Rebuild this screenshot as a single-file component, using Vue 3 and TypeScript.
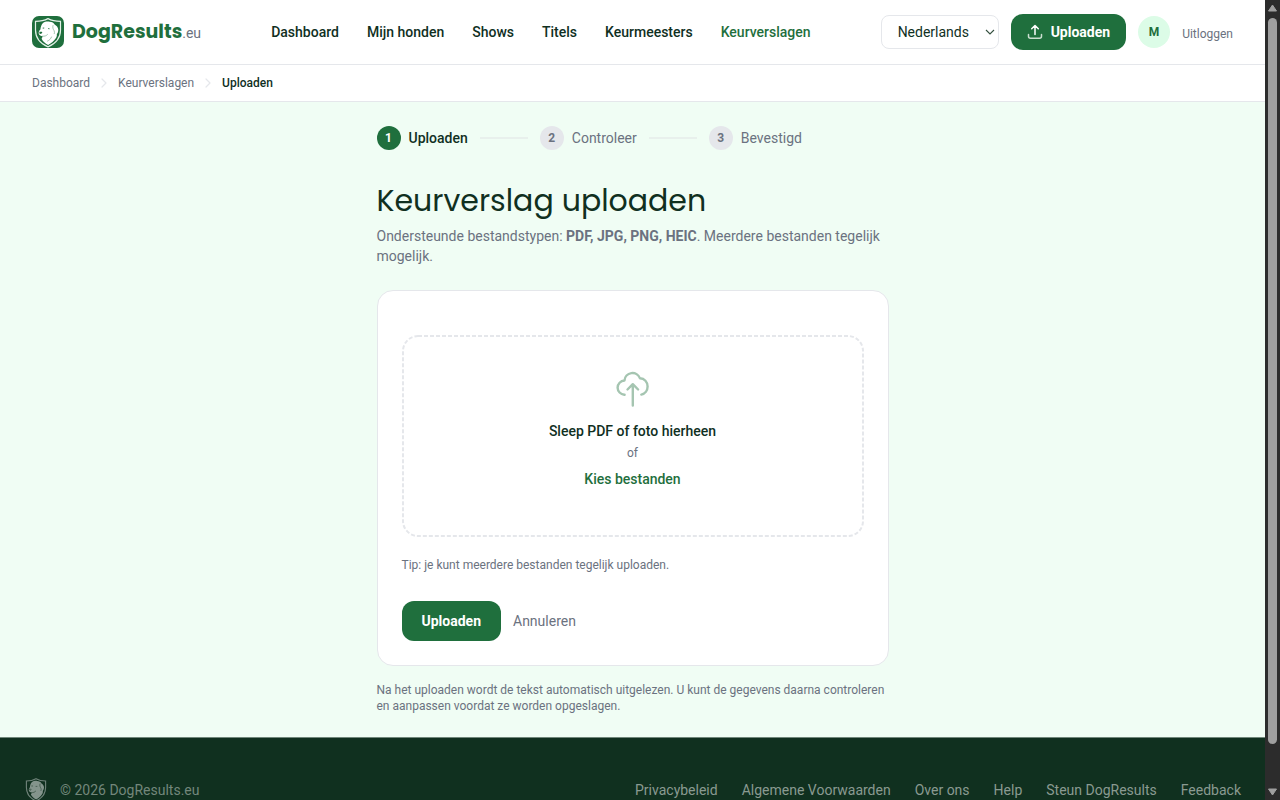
<script setup lang="ts">
import { ref } from 'vue'

interface Step {
  nr: number
  label: string
}

const navItems: string[] = ['Dashboard', 'Mijn honden', 'Shows', 'Titels', 'Keurmeesters', 'Keurverslagen']
const activeNav = 'Keurverslagen'
const crumbs: string[] = ['Dashboard', 'Keurverslagen']
const steps: Step[] = [
  { nr: 1, label: 'Uploaden' },
  { nr: 2, label: 'Controleer' },
  { nr: 3, label: 'Bevestigd' },
]
const currentStep = 1
const footerLinks: string[] = [
  'Privacybeleid',
  'Algemene Voorwaarden',
  'Over ons',
  'Help',
  'Steun DogResults',
  'Feedback',
]
const language = ref('nl')
</script>

<template>
  <div class="screen">
    <div class="page">
      <header class="topbar">
        <a class="brand" href="#">
          <svg class="brand-mark" viewBox="0 0 32 32" aria-hidden="true">
            <rect width="32" height="32" rx="7" fill="#1f6f3d" />
            <path d="M16 2.600C12.500 4.500 8.300 5.300 3.500 5.300V14c0 8 4.800 13.600 12.500 16.900 7.700-3.300 12.500-8.900 12.500-16.900V5.300C23.700 5.300 19.500 4.500 16 2.600z" fill="none" stroke="#e4f2e8" stroke-width="1.200" />
            <path d="M11 7c1.700-1.300 4.200-1.700 6.600-1.300 2.500.2 4.300 1.200 5 2.800 1.900 1 3.500 2.800 3.700 5.200 0 1.800-.5 3.300-1.500 4.400.3 1.500-.1 3-1.200 4.500-1.600 2.500-4.200 4.800-7.500 6.500-3-1.600-5.200-3.700-6.500-6.400l1.200-2.400c-1.800-.2-3.700-1.100-4.100-2.900-.2-1.600.6-2.900 1.700-3.900.2-2.500 1-5 2.600-6.500z" fill="#fff" />
            <path d="M21 9.500c-.7 2 .2 3.700 1.100 5.200.5 1.100.5 2.100.2 3M10.600 20.200c2.200.3 3.800-.5 4.900-1.700M19.500 21c-.8 1.900-2.100 3.300-4 4.100" fill="none" stroke="#8db79c" stroke-width=".8" stroke-linecap="round" />
            <path d="M7.400 15.700h2.400l.6.900-1.400 1.400-1.600-.6zM10.600 11.800l1.600-.2v1h-1.500zM16 12.200l1.700.2-.2.900-1.500-.2z" fill="#1f6f3d" />
          </svg>
          <span class="brand-text"><span class="brand-name">DogResults</span><span class="brand-tld">.eu</span></span>
        </a>
        <nav class="nav" aria-label="Hoofdmenu">
          <a v-for="item in navItems" :key="item" href="#" :class="{ active: item === activeNav }">{{ item }}</a>
        </nav>
        <div class="actions">
          <div class="lang">
            <select v-model="language" aria-label="Taal">
              <option value="nl">Nederlands</option>
              <option value="en">English</option>
              <option value="de">Deutsch</option>
            </select>
            <svg viewBox="0 0 10 6" aria-hidden="true"><path d="M1 1l4 4 4-4" fill="none" stroke="#34503f" stroke-width="1.100" /></svg>
          </div>
          <a class="btn btn-top" href="#">
            <svg viewBox="0 0 16 16" aria-hidden="true">
              <path d="M1.500 10.500v1.700a2 2 0 0 0 2 2h9a2 2 0 0 0 2-2v-1.700" fill="none" stroke="#c9decf" stroke-width="1.500" stroke-linecap="round" />
              <path d="M8 10.500V1.500M4.700 4.800L8 1.500l3.300 3.300" fill="none" stroke="#fff" stroke-width="1.500" stroke-linecap="round" stroke-linejoin="round" />
            </svg>
            Uploaden
          </a>
          <a class="avatar" href="#">M</a>
          <button class="logout" type="button">Uitloggen</button>
        </div>
      </header>

      <nav class="crumbs" aria-label="Kruimelpad">
        <template v-for="crumb in crumbs" :key="crumb">
          <a href="#">{{ crumb }}</a>
          <svg viewBox="0 0 12 12" aria-hidden="true"><path d="M4 2l4 4-4 4" fill="none" stroke="#e5e7eb" stroke-width="1.200" stroke-linecap="round" stroke-linejoin="round" /></svg>
        </template>
        <span class="current">Uploaden</span>
      </nav>

      <main class="main">
        <div class="column">
          <ol class="steps">
            <li v-for="step in steps" :key="step.nr" :class="{ current: step.nr === currentStep }">
              <span class="dot">{{ step.nr }}</span>
              <span class="step-label">{{ step.label }}</span>
            </li>
          </ol>

          <h1>Keurverslag uploaden</h1>
          <p class="intro">
            Ondersteunde bestandstypen: <strong>PDF, JPG, PNG, HEIC</strong>. Meerdere bestanden tegelijk mogelijk.
          </p>

          <form class="card" @submit.prevent>
            <div class="dropzone">
              <svg class="outline" aria-hidden="true"><rect width="100%" height="100%" rx="15" /></svg>
              <svg class="cloud" viewBox="0.700 1 40 40" aria-hidden="true">
                <path d="M12.300 26.700h-.3a7.200 7.200 0 0 1-6.700-7c0-3.900 3-7 6.900-7.200a8 8 0 0 1 15.500-2.200c4.400.2 7.600 3.700 7.600 8.200 0 4-2.600 7.300-6.300 8.100" fill="none" stroke="#a5c5b1" stroke-width="2.400" stroke-linecap="round" stroke-linejoin="round" />
                <path d="M20.500 37.500V16.500M15.200 21.500l5.300-5.300 5.300 5.300" fill="none" stroke="#a5c5b1" stroke-width="2.400" stroke-linecap="round" stroke-linejoin="round" />
              </svg>
              <p class="drop-title">Sleep PDF of foto hierheen</p>
              <p class="drop-or">of</p>
              <label class="pick">Kies bestanden<input type="file" multiple accept=".pdf,.jpg,.png,.heic" /></label>
            </div>
            <p class="tip">Tip: je kunt meerdere bestanden tegelijk uploaden.</p>
            <div class="form-actions">
              <button class="btn btn-submit" type="submit">Uploaden</button>
              <a class="cancel" href="#">Annuleren</a>
            </div>
          </form>

          <p class="note">
            Na het uploaden wordt de tekst automatisch uitgelezen. U kunt de gegevens daarna controleren en aanpassen
            voordat ze worden opgeslagen.
          </p>
        </div>
      </main>

      <footer class="footer">
        <div class="copyright">
          <svg viewBox="3 2 26 30" aria-hidden="true">
            <path d="M16 2.800C12.500 4.800 8.300 5.700 4 5.700V14c0 7.800 4.500 13.400 12 16.700 7.500-3.300 12-8.900 12-16.700V5.700C23.700 5.700 19.500 4.800 16 2.800z" fill="none" stroke="#70837a" stroke-width="1.400" />
            <path d="M11 7c1.700-1.300 4.200-1.700 6.600-1.300 2.500.2 4.300 1.200 5 2.800 1.900 1 3.200 2.800 3.400 5.200 0 1.800-.5 3.300-1.500 4.400.3 1.500-.1 3-1.200 4.500-1.600 2.500-4 4.500-7.200 6.200-3-1.600-5.200-3.400-6.500-6.100l1.200-2.400c-1.800-.2-3.400-1.100-3.800-2.900-.2-1.600.6-2.900 1.400-3.900.2-2.500 1-5 2.600-6.500z" fill="#84948c" />
            <path d="M21 9.500c-.7 2 .2 3.700 1.100 5.200.5 1.100.5 2.100.2 3M10.600 20.200c2.200.3 3.800-.5 4.900-1.700M8 16h2l-.8 1.200zM10.600 12h1.200M16 12.500h1.200" fill="none" stroke="#3c5648" stroke-width="1" stroke-linecap="round" />
          </svg>
          <span>© 2026 DogResults.eu</span>
        </div>
        <nav class="footer-links" aria-label="Voettekst">
          <a v-for="link in footerLinks" :key="link" href="#">{{ link }}</a>
        </nav>
      </footer>
    </div>

    <div class="scrollbar" aria-hidden="true">
      <svg viewBox="0 0 15 18"><path d="M7.500 5L11.500 11H3.500z" fill="#9f9f9f" stroke="#9f9f9f" stroke-linejoin="round" /></svg>
      <div class="track"><div class="thumb"></div></div>
      <svg viewBox="0 0 15 18"><path d="M7.500 13L11.500 7H3.500z" fill="#9f9f9f" stroke="#9f9f9f" stroke-linejoin="round" /></svg>
    </div>
  </div>
</template>

<style>
body {
  margin: 0;
}
</style>

<style scoped>
.screen {
  display: flex;
  height: 100vh;
  overflow: hidden;
  font-family: Roboto, 'Liberation Sans', sans-serif;
  font-size: 14px;
  line-height: 20px;
  color: #10301f;
}
.screen * {
  box-sizing: border-box;
}
a {
  color: inherit;
  text-decoration: none;
}
p,
h1,
ol {
  margin: 0;
  padding: 0;
}
button,
select {
  font: inherit;
  color: inherit;
}
.page {
  flex: 1;
  min-width: 0;
  overflow: hidden;
  background: #f0fdf4;
}
.topbar {
  display: flex;
  align-items: center;
  justify-content: space-between;
  min-height: 65px;
  padding: 0 32px;
  background: #fff;
  border-bottom: 1px solid #e5e7eb;
}
.brand {
  display: flex;
  align-items: center;
  gap: 8px;
}
.brand-mark {
  width: 32px;
  height: 32px;
}
.brand-name {
  font-family: Poppins, 'Open Sans', sans-serif;
  font-size: 19px;
  font-weight: 700;
  line-height: 28px;
  color: #1f6f3d;
}
.brand-tld {
  color: #6b7280;
}
.nav {
  display: flex;
  gap: 28px;
  font-weight: 500;
}
.nav .active {
  color: #1f6f3d;
}
.actions {
  display: flex;
  align-items: center;
  gap: 12px;
}
.lang {
  display: grid;
  align-items: center;
}
.lang select,
.lang svg {
  grid-area: 1 / 1;
}
.lang select {
  appearance: none;
  width: 118px;
  height: 34px;
  padding: 0 16px;
  background: #fff;
  border: 1px solid #e5e7eb;
  border-radius: 8px;
}
.lang svg {
  justify-self: end;
  width: 10px;
  height: 6px;
  margin-right: 4px;
  pointer-events: none;
}
.btn {
  display: flex;
  align-items: center;
  justify-content: center;
  gap: 8px;
  border: 0;
  border-radius: 12px;
  background: #1f6f3d;
  color: #fff;
  font-weight: 700;
}
.btn-top {
  height: 36px;
  padding: 0 16px;
}
.btn-top svg {
  width: 16px;
  height: 16px;
}
.avatar {
  width: 32px;
  height: 32px;
  border-radius: 50%;
  background: #dcfce7;
  color: #1f6f3d;
  font-size: 12px;
  font-weight: 700;
  line-height: 32px;
  text-align: center;
}
.logout {
  padding: 4px 0 0;
  border: 0;
  background: none;
  color: #6b7280;
  font-size: 12px;
}
.crumbs {
  display: flex;
  align-items: center;
  gap: 8px;
  min-height: 37px;
  padding: 0 32px;
  background: #fff;
  border-bottom: 1px solid #e5e7eb;
  color: #6b7280;
  font-size: 12px;
}
.crumbs svg {
  width: 12px;
  height: 12px;
}
.crumbs .current {
  color: #10301f;
  font-weight: 500;
}
.main {
  padding: 24px 24px 23px;
}
.column {
  max-width: 512px;
  margin: 0 auto;
}
.steps {
  display: flex;
  gap: 12px;
  list-style: none;
  color: #6b7280;
}
.steps li {
  display: flex;
  align-items: center;
  gap: 8px;
}
.steps li:not(:last-child)::after {
  content: '';
  width: 48px;
  height: 2px;
  margin-left: 4px;
  background: #e8f0ec;
}
.dot {
  width: 24px;
  height: 24px;
  border-radius: 50%;
  background: #e5e7eb;
  font-size: 12px;
  font-weight: 700;
  line-height: 24px;
  text-align: center;
}
.steps .current .dot {
  background: #1f6f3d;
  color: #fff;
}
.steps .current .step-label {
  color: #10301f;
  font-weight: 500;
}
h1 {
  margin-top: 32px;
  font-family: Poppins, 'Open Sans', sans-serif;
  font-size: 30px;
  font-weight: 400;
  line-height: 38px;
}
.intro {
  margin-top: 6px;
  color: #6b7280;
}
.card {
  margin-top: 24px;
  padding: 44px 24px 24px;
  background: #fff;
  border: 1px solid #e5e7eb;
  border-radius: 16px;
}
.dropzone {
  position: relative;
  display: flex;
  flex-direction: column;
  align-items: center;
  padding: 34px 34px 48px;
}
.outline {
  position: absolute;
  inset: 1px;
  width: calc(100% - 2px);
  height: calc(100% - 2px);
  overflow: visible;
  pointer-events: none;
}
.outline rect {
  fill: none;
  stroke: #e5e7eb;
  stroke-width: 2px;
  stroke-dasharray: 4 2;
}
.cloud {
  width: 40px;
  height: 40px;
}
.drop-title {
  margin-top: 12px;
  font-weight: 500;
}
.drop-or {
  margin-top: 4px;
  color: #6b7280;
  font-size: 12px;
  line-height: 16px;
}
.pick {
  margin-top: 8px;
  color: #1f6f3d;
  font-weight: 500;
  line-height: 20px;
  cursor: pointer;
}
.pick input {
  display: none;
}
.tip {
  margin-top: 20px;
  color: #6b7280;
  font-size: 12px;
  line-height: 16px;
}
.form-actions {
  display: flex;
  align-items: center;
  gap: 12px;
  margin-top: 28px;
}
.btn-submit {
  height: 40px;
  padding: 0 20px;
}
.cancel {
  color: #6b7280;
}
.note {
  margin-top: 16px;
  color: #6b7280;
  font-size: 12px;
  line-height: 16px;
}
.footer {
  display: flex;
  align-items: center;
  justify-content: space-between;
  padding: 40px 24px;
  background: #10301f;
  border-top: 1px solid #70877a;
  color: #8a9a91;
}
.copyright {
  display: flex;
  align-items: center;
  gap: 12px;
  color: #73877b;
}
.copyright svg {
  width: 24px;
  height: 24px;
}
.footer-links {
  display: flex;
  gap: 24px;
}
.scrollbar {
  display: flex;
  flex-direction: column;
  width: 15px;
  background: #2c2c2c;
}
.scrollbar svg {
  width: 15px;
  height: 18px;
}
.track {
  flex: 1;
}
.thumb {
  width: 9px;
  height: 95%;
  margin: 0 auto;
  border-radius: 5px;
  background: #9f9f9f;
}
</style>
